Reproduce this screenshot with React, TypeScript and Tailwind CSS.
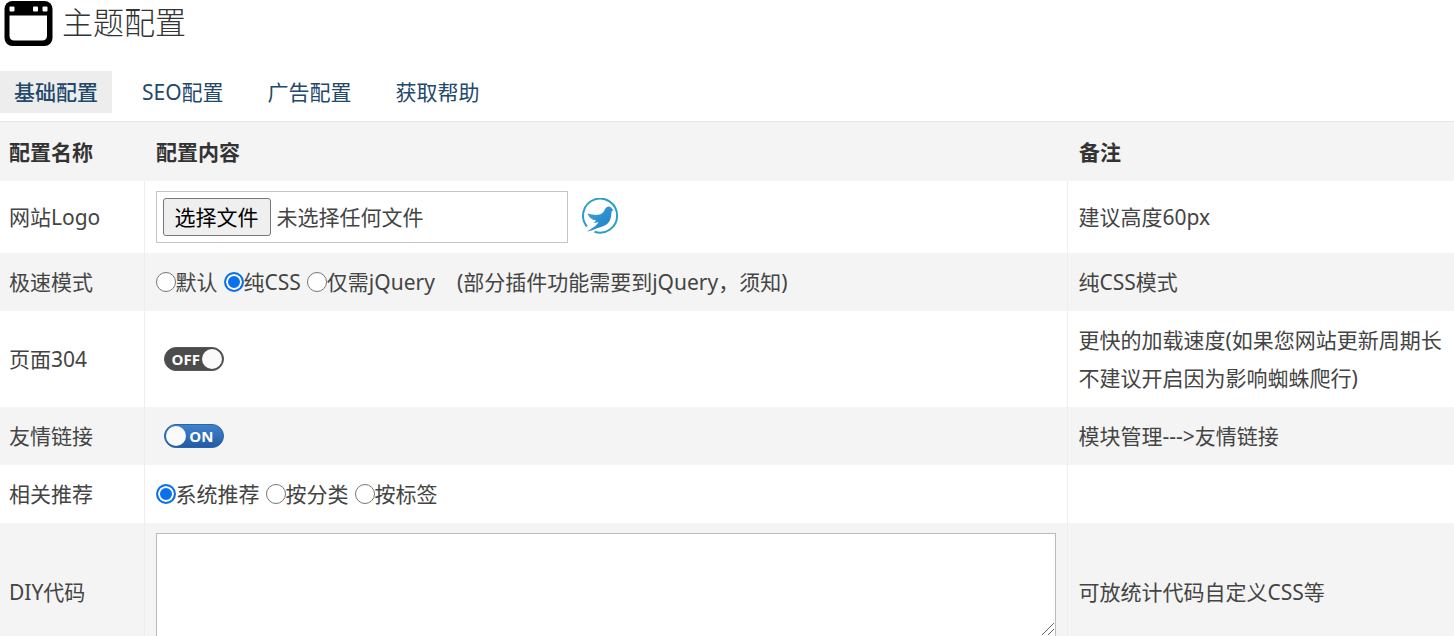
import { useState } from 'react'
import type { ReactNode } from 'react'

const tabs = ['基础配置', 'SEO配置', '广告配置', '获取帮助']

function WindowIcon() {
  return (
    <svg className="h-12 w-[50px] shrink-0" viewBox="0 0 50 48" aria-hidden="true">
      <rect x="0.500" y="1" width="48" height="45" rx="8" fill="#000" />
      <path d="M5.500 15.500h37.500v20q0 5-5 5H10.500q-5 0-5-5z" fill="#fff" />
      <rect x="5.500" y="6.500" width="5" height="5" rx="1" fill="#fff" />
      <rect x="29" y="6.500" width="5" height="5" rx="1" fill="#fff" />
      <rect x="38.500" y="6.500" width="5" height="5" rx="1" fill="#fff" />
    </svg>
  )
}

function BirdLogo() {
  return (
    <svg className="h-[38px] w-[38px] shrink-0" viewBox="0 0 38 38" aria-hidden="true">
      <defs>
        <linearGradient id="bird" x1="0" y1="0" x2="1" y2="1">
          <stop offset="0" stopColor="#3fa6dc" />
          <stop offset="1" stopColor="#1b7cc0" />
        </linearGradient>
      </defs>
      <path d="M5 28.500A17 17 0 1 1 12.500 33.700" fill="none" stroke="#2b9fc0" strokeWidth="2" />
      <path
        d="M5.500 15.500c5 1.500 9 1.800 13 .8 2.200-1 3.400-3 4.600-5.300 1-2.300 4-3.400 6-1.600.7.800 1 1.600 2.500 2.800-1.400.2-2.100.8-2.200 2.200 0 5-1.400 9.400-5 12.200-3 2.200-6.200 2.600-9.400 3.600-3.600 1.200-6 2.900-10 3.300 3.200-2.200 7-4 9.300-6.500 1-1 1.600-1.800 2.200-2.900-1.700.8-3.300 1-5 .4 1.200-.4 2-1 2.600-1.900-4.100-.7-7.200-2.900-8.600-7.100z"
        fill="url(#bird)"
      />
    </svg>
  )
}

function Radio({ name, label, checked }: { name: string; label: string; checked?: boolean }) {
  return (
    <label className="inline-flex items-center">
      <input
        type="radio"
        name={name}
        defaultChecked={checked}
        className="h-5 w-5 appearance-none rounded-full border border-[#767676] bg-white checked:border-2 checked:border-[#0b70ea] checked:bg-[#0b70ea] checked:shadow-[inset_0_0_0_2px_white]"
      />
      {label}
    </label>
  )
}

function Toggle({ label, initial }: { label: string; initial: boolean }) {
  const [on, setOn] = useState(initial)
  return (
    <button
      type="button"
      role="switch"
      aria-label={label}
      aria-checked={on}
      onClick={() => setOn(!on)}
      className={`ml-2 flex h-6 w-[60px] items-center justify-between rounded-full border px-px font-['Open_Sans',sans-serif] text-[15px] leading-5 font-bold text-white ${
        on
          ? 'flex-row-reverse border-[#2b64a8] bg-linear-to-b from-[#3f83cc] to-[#225ba6]'
          : 'border-[#555] bg-[#4c4c4c]'
      }`}
    >
      <span className={on ? 'pr-2' : 'pl-1.5'}>{on ? 'ON' : 'OFF'}</span>
      <span className="h-5 w-5 rounded-full bg-[#fafafa]" />
    </button>
  )
}

function Row({ name, note, children }: { name: string; note?: string; children: ReactNode }) {
  return (
    <tr className="even:bg-[#f4f4f4]">
      <td className="py-2.5 pr-2.5 pl-[9px]">{name}</td>
      <td className="border-x border-[#eee] px-[11px] py-2.5">{children}</td>
      <td className="py-2.5 pr-2 pl-[11px]">{note}</td>
    </tr>
  )
}

export default function App() {
  const [tab, setTab] = useState(0)
  const [file, setFile] = useState('')

  return (
    <main className="bg-white font-['Noto_Sans','Noto_Sans_CJK_SC',sans-serif] text-[21px] leading-[38px] text-[#444]">
      <header className="flex h-[71px] items-start gap-2 pl-1">
        <WindowIcon />
        <h1 className="text-[31px] leading-[44px] font-light text-[#333]">主题配置</h1>
      </header>

      <nav className="flex gap-4 pb-2">
        {tabs.map((item, i) => (
          <a
            key={item}
            href="#"
            onClick={() => setTab(i)}
            className={`px-3.5 py-0.5 text-[#22496b] ${i === tab ? 'bg-[#ededed] font-medium' : ''}`}
          >
            {item}
          </a>
        ))}
      </nav>

      <table className="w-full table-fixed border-collapse border-t border-[#e6e6e6]">
        <colgroup>
          <col className="w-[144px]" />
          <col />
          <col className="w-[387px]" />
        </colgroup>
        <thead>
          <tr className="bg-[#f4f4f4] text-left text-[#333]">
            <th className="pt-[11px] pb-2.5 pl-[9px] font-bold">配置名称</th>
            <th className="pt-[11px] pb-2.5 pl-3 font-bold">配置内容</th>
            <th className="pt-[11px] pb-2.5 pl-3 font-bold">备注</th>
          </tr>
        </thead>
        <tbody>
          <Row name="网站Logo" note="建议高度60px">
            <div className="flex items-center gap-3.5">
              <label className="relative flex h-[52px] w-[412px] items-center gap-1.5 border border-[#c4c4c4] bg-white px-1.5">
                <span className="rounded-[3px] border border-[#767676] bg-[#efefef] px-[11px] leading-9 text-black">
                  选择文件
                </span>
                <span>{file || '未选择任何文件'}</span>
                <input
                  type="file"
                  aria-label="网站Logo"
                  onChange={(e) => setFile(e.target.files?.[0]?.name ?? '')}
                  className="absolute inset-0 opacity-0"
                />
              </label>
              <BirdLogo />
            </div>
          </Row>
          <Row name="极速模式" note="纯CSS模式">
            <div className="flex items-center gap-1.5">
              <Radio name="speed" label="默认" />
              <Radio name="speed" label="纯CSS" checked />
              <Radio name="speed" label="仅需jQuery" />
              <span className="pl-4">(部分插件功能需要到jQuery，须知)</span>
            </div>
          </Row>
          <Row name="页面304" note="更快的加载速度(如果您网站更新周期长不建议开启因为影响蜘蛛爬行)">
            <Toggle label="页面304" initial={false} />
          </Row>
          <Row name="友情链接" note="模块管理--->友情链接">
            <Toggle label="友情链接" initial />
          </Row>
          <Row name="相关推荐">
            <div className="flex items-center gap-1.5">
              <Radio name="related" label="系统推荐" checked />
              <Radio name="related" label="按分类" />
              <Radio name="related" label="按标签" />
            </div>
          </Row>
          <Row name="DIY代码" note="可放统计代码自定义CSS等">
            <div className="relative mb-3.5">
              <textarea
                aria-label="DIY代码"
                className="block h-[104px] w-full resize-none border border-[#bbb] bg-white p-2"
              />
              <svg className="pointer-events-none absolute right-0.5 bottom-0.5 h-3 w-3" viewBox="0 0 12 12">
                <path d="M0 12L12 0M6 12l6-6" stroke="#666" fill="none" />
              </svg>
            </div>
          </Row>
        </tbody>
      </table>
    </main>
  )
}
